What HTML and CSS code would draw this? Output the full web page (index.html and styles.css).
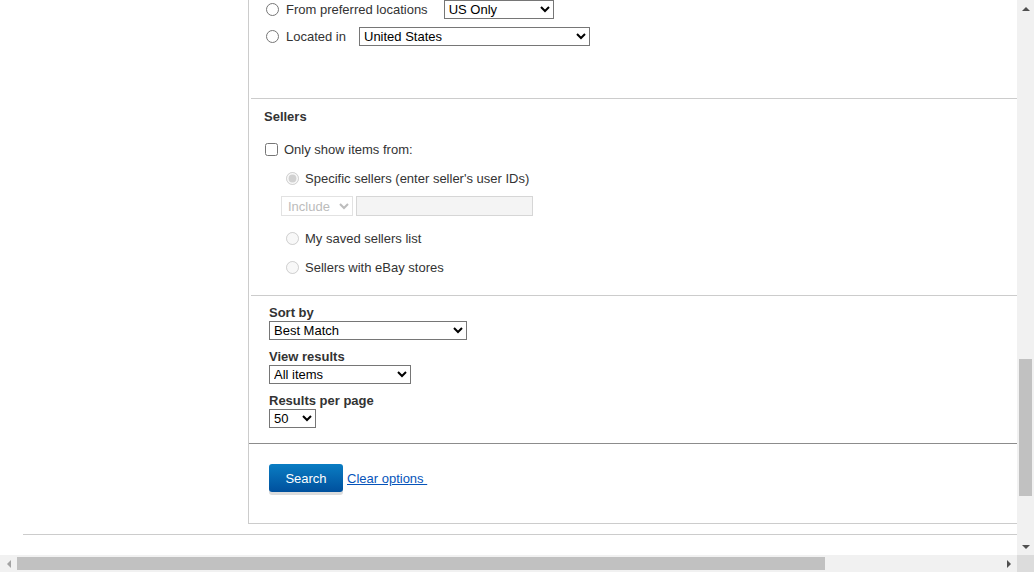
FILE: index.html
```html
<!DOCTYPE html>
<html>
<head>
<meta charset="utf-8">
<link rel="stylesheet" href="styles.css">
</head>
<body>
<div class="window">
  <div class="viewport">
    <div class="page">
      <div class="layout">
        <div class="sidebar"></div>
        <div class="panel">
          <div class="sec sec-location">
            <div class="opt-row">
              <input type="radio" name="loc" class="radio">
              <span class="lbl lbl-pref">From preferred locations</span>
              <select class="sel sel-pref"><option>US Only</option></select>
            </div>
            <div class="opt-row">
              <input type="radio" name="loc" class="radio">
              <span class="lbl lbl-located">Located in</span>
              <select class="sel sel-country"><option>United States</option></select>
            </div>
          </div>

          <div class="sec sec-sellers">
            <div class="sec-title">Sellers</div>
            <div class="opt-row row-check">
              <input type="checkbox" class="check">
              <span class="lbl">Only show items from:</span>
            </div>
            <div class="opt-row row-sub row-specific">
              <input type="radio" name="sel" class="radio" checked disabled>
              <span class="lbl">Specific sellers (enter seller's user IDs)</span>
            </div>
            <div class="include-row">
              <select class="sel sel-include" disabled><option>Include</option></select>
              <input type="text" class="ids" disabled>
            </div>
            <div class="opt-row row-sub row-saved">
              <input type="radio" name="sel" class="radio" disabled>
              <span class="lbl">My saved sellers list</span>
            </div>
            <div class="opt-row row-sub row-stores">
              <input type="radio" name="sel" class="radio" disabled>
              <span class="lbl">Sellers with eBay stores</span>
            </div>
          </div>

          <div class="sec-sort">
            <div class="field">
              <div class="field-lbl">Sort by</div>
              <select class="sel sel-sort"><option>Best Match</option></select>
            </div>
            <div class="field">
              <div class="field-lbl">View results</div>
              <select class="sel sel-view"><option>All items</option></select>
            </div>
            <div class="field">
              <div class="field-lbl">Results per page</div>
              <select class="sel sel-per"><option>50</option></select>
            </div>
          </div>

          <div class="sec-actions">
            <button class="btn-search">Search</button>
            <a href="#" class="clear-link">Clear options&nbsp;</a>
          </div>
        </div>
      </div>
      <div class="footer-line"></div>
    </div>
  </div>

  <div class="vscroll">
    <div class="sb-btn"><span class="arr arr-up"></span></div>
    <div class="vtrack"><div class="vthumb"></div></div>
    <div class="sb-btn"><span class="arr arr-down"></span></div>
  </div>

  <div class="hscroll">
    <div class="sb-btn"><span class="arr arr-left"></span></div>
    <div class="htrack"><div class="hthumb"></div></div>
    <div class="sb-btn"><span class="arr arr-right"></span></div>
  </div>

  <div class="corner"></div>
</div>
</body>
</html>
```

FILE: styles.css
```css
html, body {
  margin: 0;
  padding: 0;
  background: #fff;
}

body {
  font-family: "Liberation Sans", Arial, sans-serif;
  font-size: 13px;
  color: #333;
}

.window {
  display: grid;
  grid-template-columns: 1017px 17px;
  grid-template-rows: 555px 17px;
  width: 1034px;
  height: 572px;
  overflow: hidden;
}

.viewport {
  overflow: hidden;
  background: #fff;
}

.page {
  width: 1237px;
}

.layout {
  display: flex;
}

.sidebar {
  width: 248px;
  flex: none;
}

.panel {
  flex: 1;
  border-left: 1px solid #ccc;
  border-bottom: 1px solid #ccc;
}

/* generic rows */
.opt-row {
  display: flex;
  align-items: center;
  height: 19px;
  gap: 6px;
}

.radio,
.check {
  margin: 0;
  width: 13px;
  height: 13px;
  flex: none;
}

.lbl {
  white-space: nowrap;
}

.sel {
  font-family: "Liberation Sans", Arial, sans-serif;
  font-size: 13px;
  color: #000;
  height: 19px;
  margin: 0;
  padding: 0;
  border: 1px solid #767676;
  border-radius: 0;
  background: #fff;
  box-sizing: border-box;
}

/* location section */
.sec {
  margin-left: 2px;
  border-bottom: 1px solid #ccc;
}

.sec-location {
  padding: 0 0 52px 15px;
  display: flex;
  flex-direction: column;
  gap: 8px;
}

.sec-location .radio {
  margin-right: 1px;
}

.lbl-pref {
  margin-right: 10px;
}

.lbl-located {
  margin-right: 7px;
}

.sel-pref {
  width: 110px;
}

.sel-country {
  width: 231px;
}

/* sellers */
.sec-sellers {
  padding: 10px 0 18px 13px;
}

.sec-title {
  font-weight: bold;
  line-height: 16px;
}

.row-check {
  margin-top: 15px;
  padding-left: 1px;
}

.row-sub {
  padding-left: 22px;
}

.row-specific {
  margin-top: 10px;
}

.include-row {
  display: flex;
  gap: 3px;
  margin-top: 8px;
  padding-left: 17px;
  height: 20px;
}

.sel-include {
  width: 72px;
  height: 20px;
  padding-left: 2px;
  color: #a0a0a0;
  border-color: #d6d6d6;
  background: #fff;
}

.ids {
  width: 177px;
  height: 20px;
  margin: 0;
  box-sizing: border-box;
  border: 1px solid #d6d6d6;
  background: #f4f4f4;
  border-radius: 0;
}

.row-saved {
  margin-top: 13px;
}

.row-stores {
  margin-top: 10px;
}

/* sort section */
.sec-sort {
  padding: 9px 0 15px 20px;
  border-bottom: 1px solid #8c8c8c;
  display: flex;
  flex-direction: column;
  gap: 9px;
}

.field-lbl {
  font-weight: bold;
  line-height: 16px;
}

.field .sel {
  display: block;
}

.sel-sort {
  width: 198px;
}

.sel-view {
  width: 142px;
}

.sel-per {
  width: 47px;
}

/* actions */
.sec-actions {
  padding: 20px 0 31px 20px;
  display: flex;
  align-items: center;
}

.btn-search {
  width: 74px;
  height: 28px;
  border: none;
  border-radius: 3px;
  background: linear-gradient(#0a7dc3, #00509d);
  color: #fff;
  font-family: "Liberation Sans", Arial, sans-serif;
  font-size: 13px;
  padding: 0;
  box-shadow: 0 3px 0 #dcdcdc;
}

.clear-link {
  margin-left: 4px;
  color: #0654ba;
  text-decoration: underline;
}

.footer-line {
  margin: 10px 0 0 23px;
  border-top: 1px solid #ccc;
}

/* fake scrollbars */
.vscroll {
  background: #f1f1f1;
  display: flex;
  flex-direction: column;
}

.hscroll {
  background: #f1f1f1;
  display: flex;
}

.corner {
  background: #dcdcdc;
}

.sb-btn {
  width: 17px;
  height: 17px;
  flex: none;
  display: flex;
  align-items: center;
  justify-content: center;
}

.vtrack {
  flex: 1;
  padding-top: 342px;
  display: flex;
  justify-content: center;
}

.vthumb {
  width: 13px;
  height: 137px;
  background: #c1c1c1;
}

.htrack {
  flex: 1;
  display: flex;
  align-items: center;
}

.hthumb {
  width: 808px;
  height: 13px;
  background: #c1c1c1;
}

.arr {
  width: 0;
  height: 0;
  border-style: solid;
}

.arr-up {
  border-width: 0 4px 4px 4px;
  border-color: transparent transparent #505050 transparent;
}

.arr-down {
  border-width: 4px 4px 0 4px;
  border-color: #505050 transparent transparent transparent;
}

.arr-left {
  border-width: 4px 4px 4px 0;
  border-color: transparent #a3a3a3 transparent transparent;
}

.arr-right {
  border-width: 4px 0 4px 4px;
  border-color: transparent transparent transparent #505050;
}
```
